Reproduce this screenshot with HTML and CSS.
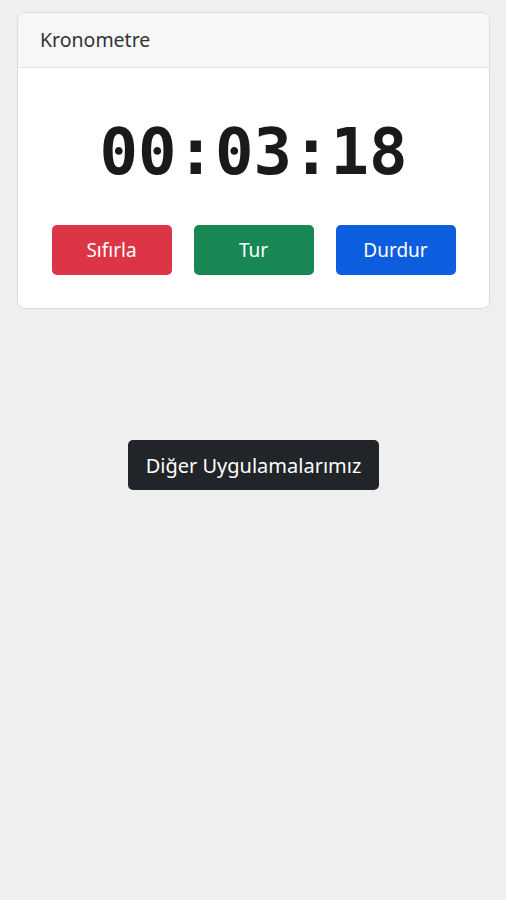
FILE: index.html
```html
<!DOCTYPE html>
<html lang="tr">
<head>
  <meta charset="UTF-8" />
  <meta name="viewport" content="width=device-width, initial-scale=1.0"/>
  <title>Kronometre</title>
  <link rel="stylesheet" href="styles.css">
</head>
<body>
  <div class="card">
    <div class="card-header">Kronometre</div>
    <div class="card-body">
      <div id="time" class="time">00:03:18</div>
      <div class="buttons">
        <button class="btn btn-red">Sıfırla</button>
        <button class="btn btn-green">Tur</button>
        <button class="btn btn-blue">Durdur</button>
      </div>
    </div>
  </div>

  <div class="more">
    <button class="btn btn-dark">Diğer Uygulamalarımız</button>
  </div>
</body>
</html>
```

FILE: styles.css
```css
body {
  font-family: "Noto Sans", Arial, sans-serif;
  margin: 0;
  padding: 12px 16px 12px 17px;
  background-color: #efefef;
  color: #212529;
}
.card {
  background: #fff;
  border: 1px solid #dcdcdc;
  border-radius: 8px;
  overflow: hidden;
}
.card-header {
  background: #f7f7f7;
  border-bottom: 1px solid #e2e2e2;
  height: 54px;
  line-height: 54px;
  padding: 0 22px;
  font-size: 19.5px;
  color: #333;
}
.card-body {
  padding: 46px 0 33px;
}
.time {
  font-family: "DejaVu Sans Mono", monospace;
  font-size: 64px;
  font-weight: bold;
  line-height: 76px;
  text-align: center;
  color: #1a1a1a;
}
.buttons {
  display: flex;
  justify-content: center;
  gap: 22px;
  margin-top: 35px;
}
.btn {
  font-family: "Noto Sans", Arial, sans-serif;
  border: none;
  border-radius: 5px;
  color: #fff;
  font-size: 19px;
  cursor: pointer;
}
.buttons .btn {
  width: 120px;
  height: 50px;
}
.btn-red {
  background: #dc3545;
}
.btn-green {
  background: #198754;
}
.btn-blue {
  background: #0d5ddf;
}
.more {
  display: flex;
  justify-content: center;
  margin-top: 131px;
}
.btn-dark {
  background: #212529;
  height: 50px;
  padding: 0 18px;
  font-size: 20px;
}
```
